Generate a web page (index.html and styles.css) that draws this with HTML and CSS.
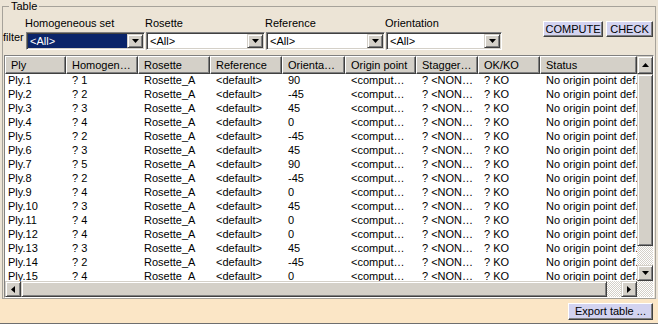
FILE: index.html
```html
<!DOCTYPE html>
<html>
<head>
<meta charset="utf-8">
<title>Table</title>
<link rel="stylesheet" href="styles.css">
</head>
<body>
<div class="app">
  <fieldset class="group">
    <legend class="legend">Table</legend>
    <div class="toolbar">
      <span class="filter-label">filter</span>
      <div class="filters">
        <div class="filter">
          <div class="flabel">Homogeneous set</div>
          <div class="combo"><span class="ctext selected">&lt;All&gt;</span><span class="carrow"><svg width="7" height="4" viewBox="0 0 7 4"><polygon points="0,0 7,0 3.5,4" fill="#000"/></svg></span></div>
        </div>
        <div class="filter">
          <div class="flabel">Rosette</div>
          <div class="combo"><span class="ctext">&lt;All&gt;</span><span class="carrow"><svg width="7" height="4" viewBox="0 0 7 4"><polygon points="0,0 7,0 3.5,4" fill="#000"/></svg></span></div>
        </div>
        <div class="filter">
          <div class="flabel">Reference</div>
          <div class="combo"><span class="ctext">&lt;All&gt;</span><span class="carrow"><svg width="7" height="4" viewBox="0 0 7 4"><polygon points="0,0 7,0 3.5,4" fill="#000"/></svg></span></div>
        </div>
        <div class="filter last">
          <div class="flabel">Orientation</div>
          <div class="combo"><span class="ctext">&lt;All&gt;</span><span class="carrow"><svg width="7" height="4" viewBox="0 0 7 4"><polygon points="0,0 7,0 3.5,4" fill="#000"/></svg></span></div>
        </div>
      </div>
      <div class="actions">
        <button class="btn compute">COMPUTE</button>
        <button class="btn check">CHECK</button>
      </div>
    </div>

    <div class="grid">
      <div class="head">
        <div class="hcell c1">Ply</div>
        <div class="hcell c2">Homogen…</div>
        <div class="hcell c3">Rosette</div>
        <div class="hcell c4">Reference</div>
        <div class="hcell c5">Orienta…</div>
        <div class="hcell c6">Origin point</div>
        <div class="hcell c7">Stagger…</div>
        <div class="hcell c8">OK/KO</div>
        <div class="hcell c9">Status</div>
      </div>
      <div class="body">
        <div class="row"><span class="cell c1 first">Ply.1</span><span class="cell c2">? 1</span><span class="cell c3">Rosette_A</span><span class="cell c4">&lt;default&gt;</span><span class="cell c5">90</span><span class="cell c6">&lt;comput…</span><span class="cell c7">? &lt;NON…</span><span class="cell c8">? KO</span><span class="cell c9">No origin point def.</span></div>
        <div class="row"><span class="cell c1 first">Ply.2</span><span class="cell c2">? 2</span><span class="cell c3">Rosette_A</span><span class="cell c4">&lt;default&gt;</span><span class="cell c5">-45</span><span class="cell c6">&lt;comput…</span><span class="cell c7">? &lt;NON…</span><span class="cell c8">? KO</span><span class="cell c9">No origin point def.</span></div>
        <div class="row"><span class="cell c1 first">Ply.3</span><span class="cell c2">? 3</span><span class="cell c3">Rosette_A</span><span class="cell c4">&lt;default&gt;</span><span class="cell c5">45</span><span class="cell c6">&lt;comput…</span><span class="cell c7">? &lt;NON…</span><span class="cell c8">? KO</span><span class="cell c9">No origin point def.</span></div>
        <div class="row"><span class="cell c1 first">Ply.4</span><span class="cell c2">? 4</span><span class="cell c3">Rosette_A</span><span class="cell c4">&lt;default&gt;</span><span class="cell c5">0</span><span class="cell c6">&lt;comput…</span><span class="cell c7">? &lt;NON…</span><span class="cell c8">? KO</span><span class="cell c9">No origin point def.</span></div>
        <div class="row"><span class="cell c1 first">Ply.5</span><span class="cell c2">? 2</span><span class="cell c3">Rosette_A</span><span class="cell c4">&lt;default&gt;</span><span class="cell c5">-45</span><span class="cell c6">&lt;comput…</span><span class="cell c7">? &lt;NON…</span><span class="cell c8">? KO</span><span class="cell c9">No origin point def.</span></div>
        <div class="row"><span class="cell c1 first">Ply.6</span><span class="cell c2">? 3</span><span class="cell c3">Rosette_A</span><span class="cell c4">&lt;default&gt;</span><span class="cell c5">45</span><span class="cell c6">&lt;comput…</span><span class="cell c7">? &lt;NON…</span><span class="cell c8">? KO</span><span class="cell c9">No origin point def.</span></div>
        <div class="row"><span class="cell c1 first">Ply.7</span><span class="cell c2">? 5</span><span class="cell c3">Rosette_A</span><span class="cell c4">&lt;default&gt;</span><span class="cell c5">90</span><span class="cell c6">&lt;comput…</span><span class="cell c7">? &lt;NON…</span><span class="cell c8">? KO</span><span class="cell c9">No origin point def.</span></div>
        <div class="row"><span class="cell c1 first">Ply.8</span><span class="cell c2">? 2</span><span class="cell c3">Rosette_A</span><span class="cell c4">&lt;default&gt;</span><span class="cell c5">-45</span><span class="cell c6">&lt;comput…</span><span class="cell c7">? &lt;NON…</span><span class="cell c8">? KO</span><span class="cell c9">No origin point def.</span></div>
        <div class="row"><span class="cell c1 first">Ply.9</span><span class="cell c2">? 4</span><span class="cell c3">Rosette_A</span><span class="cell c4">&lt;default&gt;</span><span class="cell c5">0</span><span class="cell c6">&lt;comput…</span><span class="cell c7">? &lt;NON…</span><span class="cell c8">? KO</span><span class="cell c9">No origin point def.</span></div>
        <div class="row"><span class="cell c1 first">Ply.10</span><span class="cell c2">? 3</span><span class="cell c3">Rosette_A</span><span class="cell c4">&lt;default&gt;</span><span class="cell c5">45</span><span class="cell c6">&lt;comput…</span><span class="cell c7">? &lt;NON…</span><span class="cell c8">? KO</span><span class="cell c9">No origin point def.</span></div>
        <div class="row"><span class="cell c1 first">Ply.11</span><span class="cell c2">? 4</span><span class="cell c3">Rosette_A</span><span class="cell c4">&lt;default&gt;</span><span class="cell c5">0</span><span class="cell c6">&lt;comput…</span><span class="cell c7">? &lt;NON…</span><span class="cell c8">? KO</span><span class="cell c9">No origin point def.</span></div>
        <div class="row"><span class="cell c1 first">Ply.12</span><span class="cell c2">? 4</span><span class="cell c3">Rosette_A</span><span class="cell c4">&lt;default&gt;</span><span class="cell c5">0</span><span class="cell c6">&lt;comput…</span><span class="cell c7">? &lt;NON…</span><span class="cell c8">? KO</span><span class="cell c9">No origin point def.</span></div>
        <div class="row"><span class="cell c1 first">Ply.13</span><span class="cell c2">? 3</span><span class="cell c3">Rosette_A</span><span class="cell c4">&lt;default&gt;</span><span class="cell c5">45</span><span class="cell c6">&lt;comput…</span><span class="cell c7">? &lt;NON…</span><span class="cell c8">? KO</span><span class="cell c9">No origin point def.</span></div>
        <div class="row"><span class="cell c1 first">Ply.14</span><span class="cell c2">? 2</span><span class="cell c3">Rosette_A</span><span class="cell c4">&lt;default&gt;</span><span class="cell c5">-45</span><span class="cell c6">&lt;comput…</span><span class="cell c7">? &lt;NON…</span><span class="cell c8">? KO</span><span class="cell c9">No origin point def.</span></div>
        <div class="row"><span class="cell c1 first">Ply.15</span><span class="cell c2">? 4</span><span class="cell c3">Rosette_A</span><span class="cell c4">&lt;default&gt;</span><span class="cell c5">0</span><span class="cell c6">&lt;comput…</span><span class="cell c7">? &lt;NON…</span><span class="cell c8">? KO</span><span class="cell c9">No origin point def.</span></div>
      </div>
      <div class="vscroll">
        <span class="sbtn up"><svg width="7" height="4" viewBox="0 0 7 4"><polygon points="0,4 7,4 3.5,0" fill="#000"/></svg></span>
        <span class="vthumb"></span>
        <span class="sbtn down"><svg width="7" height="4" viewBox="0 0 7 4"><polygon points="0,0 7,0 3.5,4" fill="#000"/></svg></span>
      </div>
      <div class="hscroll">
        <span class="sbtn left"><svg width="4" height="7" viewBox="0 0 4 7"><polygon points="4,0 4,7 0,3.5" fill="#000"/></svg></span>
        <span class="hthumb"></span>
        <span class="sbtn right"><svg width="4" height="7" viewBox="0 0 4 7"><polygon points="0,0 0,7 4,3.5" fill="#000"/></svg></span>
      </div>
      <div class="corner"></div>
    </div>
  </fieldset>
  <div class="footer">
    <button class="btn export">Export table ...</button>
  </div>
</div>
</body>
</html>
```
FILE: styles.css
```css
* { box-sizing: border-box; }
html, body { margin: 0; padding: 0; }
body {
  width: 658px;
  height: 324px;
  overflow: hidden;
  background: #ECE4D6;
  font-family: "Liberation Sans", Arial, sans-serif;
  font-size: 11px;
  color: #000;
}
.app { display: flex; flex-direction: column; height: 324px; }

.group {
  margin: 0 2px;
  padding: 0;
  min-width: 0;
  border: 1px solid #A6A29A;
  display: flex;
  flex-direction: column;
}
.legend {
  margin-left: 6px;
  padding: 0 2px;
  line-height: 13px;
  font-size: 11px;
}

.toolbar { display: flex; align-items: flex-start; height: 37px; }
.filter-label { margin-top: 18px; line-height: 13px; width: 23px; }
.filters { display: flex; gap: 1px; }
.filter { display: flex; flex-direction: column; width: 119px; }
.filter.last { width: 116px; }
.flabel { margin-top: 4px; margin-left: -1px; line-height: 13px; white-space: nowrap; }
.combo {
  margin-top: 2px;
  height: 18px;
  display: flex;
  background: #fff;
  border: 1px solid;
  border-color: #808080 #fff #fff #808080;
  box-shadow: inset 1px 1px 0 #404040, inset -1px -1px 0 #D4D0C8;
  padding: 1px;
}
.ctext { flex: 1; line-height: 14px; padding-left: 2px; white-space: nowrap; }
.ctext.selected { background: #0A246A; color: #fff; }
.carrow, .sbtn {
  flex: none;
  width: 16px;
  height: 14px;
  background: #D4D0C8;
  border: 1px solid;
  border-color: #D4D0C8 #404040 #404040 #D4D0C8;
  box-shadow: inset 1px 1px 0 #fff, inset -1px -1px 0 #808080;
  display: flex;
  align-items: center;
  justify-content: center;
}
.carrow svg, .sbtn svg { display: block; }

.actions { margin-left: auto; margin-top: 8px; margin-right: 2px; display: flex; gap: 3px; }
.btn {
  height: 16px;
  padding: 0;
  background: #D3D3F0;
  border: 1px solid;
  border-color: #fff #404040 #404040 #fff;
  box-shadow: inset -1px -1px 0 #808080;
  font-family: "Liberation Sans", Arial, sans-serif;
  font-size: 11px;
  line-height: 14px;
  color: #000;
}
.compute { width: 60px; }
.check { width: 47px; }

.grid {
  margin: 5px 1px 0;
  height: 243px;
  display: grid;
  grid-template-columns: 1fr 16px;
  grid-template-rows: 18px 1fr 16px;
  border: 1px solid;
  border-color: #808080 #fff #fff #808080;
  background: #fff;
}
.head { grid-column: 1; grid-row: 1; display: flex; overflow: hidden; }
.hcell {
  flex: none;
  height: 18px;
  background: #D4D0C8;
  border: 1px solid;
  border-color: #fff #404040 #404040 #fff;
  box-shadow: inset -1px -1px 0 #808080;
  padding-left: 5px;
  line-height: 16px;
  white-space: nowrap;
  overflow: hidden;
}
.body { grid-column: 1; grid-row: 2; overflow: hidden; }
.row { display: flex; height: 14px; line-height: 12px; }
.cell { flex: none; padding-left: 6px; white-space: nowrap; overflow: hidden; }
.cell.first { padding-left: 3px; }
.c1 { width: 61px; }
.c2 { width: 72px; }
.c3 { width: 72px; }
.c4 { width: 72px; }
.c5 { width: 63px; }
.c6 { width: 71px; }
.c7 { width: 62px; }
.c8 { width: 62px; }
.c9 { width: 97px; }

.vscroll, .hscroll, .corner {
  background: repeating-conic-gradient(#D4D0C8 0 25%, #fff 0 50%) 0 0 / 2px 2px;
}
.vscroll { grid-column: 2; grid-row: 1 / 3; display: flex; flex-direction: column; }
.sbtn { height: 16px; }
.vscroll .up { height: 18px; }
.vscroll .down { margin-top: auto; }
.vthumb, .hthumb {
  flex: none;
  background: #D4D0C8;
  border: 1px solid;
  border-color: #D4D0C8 #404040 #404040 #D4D0C8;
  box-shadow: inset 1px 1px 0 #fff, inset -1px -1px 0 #808080;
}
.vthumb { height: 172px; }
.hscroll { grid-column: 1; grid-row: 3; display: flex; }
.hthumb { width: 586px; height: 16px; }
.hscroll .right { margin-left: auto; }
.corner { grid-column: 2; grid-row: 3; }

.footer {
  flex: 1;
  background: #FBE6C6;
  border-bottom: 1px solid #6E6E6E;
  display: flex;
  justify-content: flex-end;
  align-items: flex-start;
  padding: 4px 5px 0 0;
}
.export { width: 85px; height: 17px; line-height: 15px; }
```
